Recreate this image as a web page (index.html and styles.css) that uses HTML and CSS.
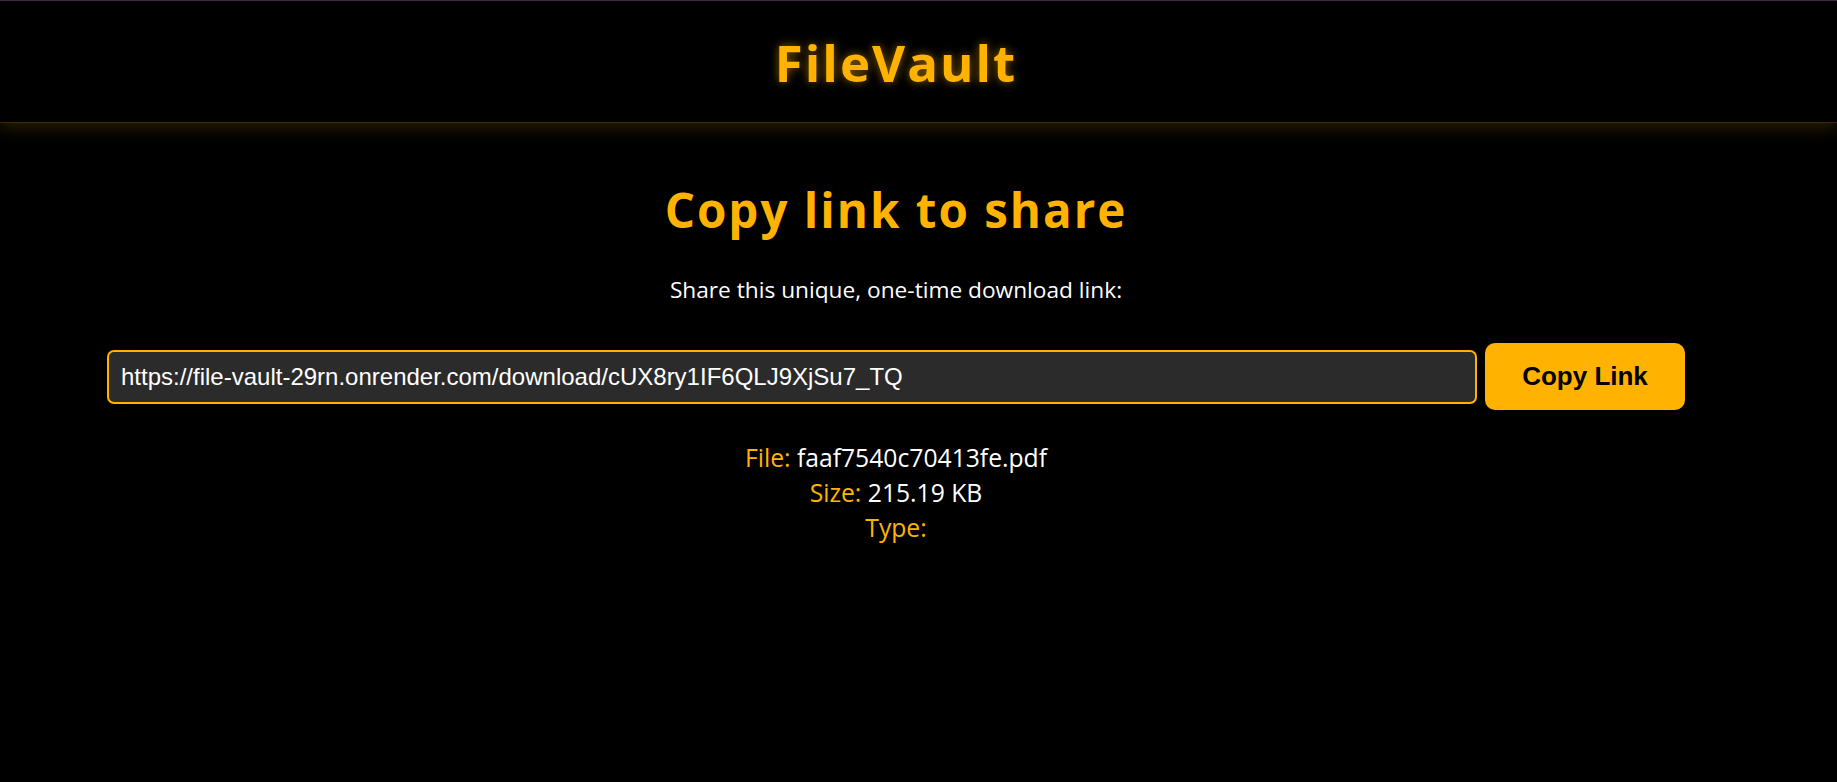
FILE: index.html
```html
<!DOCTYPE html>
<html lang="en">
<head>
<meta charset="utf-8">
<title>FileVault</title>
<link rel="stylesheet" href="styles.css">
</head>
<body>
<header class="site-header">
  <div class="wrap header-inner">
    <h1 class="brand">FileVault</h1>
  </div>
</header>
<main class="wrap share">
  <h2 class="share-title">Copy link to share</h2>
  <p class="share-sub">Share this unique, one-time download link:</p>
  <div class="link-row">
    <input class="link-input" type="text" readonly value="https://file-vault-29rn.onrender.com/download/cUX8ry1IF6QLJ9XjSu7_TQ">
    <button class="copy-btn" type="button">Copy Link</button>
  </div>
  <div class="file-info">
    <div><span class="label">File:</span> faaf7540c70413fe.pdf</div>
    <div><span class="label">Size:</span> 215.19 KB</div>
    <div><span class="label">Type:</span> </div>
  </div>
</main>
</body>
</html>
```
FILE: styles.css
```css
* { box-sizing: border-box; }
html, body { margin: 0; padding: 0; }
body {
  background: #000;
  color: #fff;
  font-family: "Open Sans", "Noto Sans", sans-serif;
  border-top: 1px solid #3e2c3e;
}
.wrap {
  width: 1792px;
}
.site-header {
  height: 122px;
  border-bottom: 1px solid #3a2a08;
  box-shadow: 0 4px 16px rgba(255, 179, 0, 0.18);
}
.header-inner {
  height: 100%;
  display: flex;
  align-items: center;
  justify-content: center;
}
.brand {
  margin: 0;
  font-size: 51px;
  font-weight: 700;
  letter-spacing: 2px;
  color: #ffb300;
  text-shadow: 0 0 10px rgba(255, 179, 0, 0.55);
}
.share {
  display: flex;
  flex-direction: column;
  align-items: center;
  padding-top: 54px;
}
.share-title {
  margin: 0;
  font-size: 47.5px;
  font-weight: 700;
  letter-spacing: 2px;
  color: #ffb300;
}
.share-sub {
  margin: 32px 0 0;
  font-size: 22.7px;
}
.link-row {
  display: flex;
  align-items: center;
  gap: 8px;
  margin-top: 38px;
}
.link-input {
  width: 1370px;
  height: 54px;
  padding: 0 12px;
  background: #2b2b2b;
  color: #fff;
  border: 2px solid #ffb300;
  border-radius: 7px;
  font-family: "Liberation Sans", Arial, sans-serif;
  font-size: 24px;
  outline: none;
}
.copy-btn {
  width: 200px;
  height: 67px;
  background: #ffb300;
  color: #000;
  border: none;
  border-radius: 10px;
  font-family: "Liberation Sans", Arial, sans-serif;
  font-weight: 700;
  font-size: 26px;
}
.file-info {
  margin-top: 30px;
  text-align: center;
  font-size: 24.7px;
  line-height: 35px;
}
.label { color: #ffb300; }
```
